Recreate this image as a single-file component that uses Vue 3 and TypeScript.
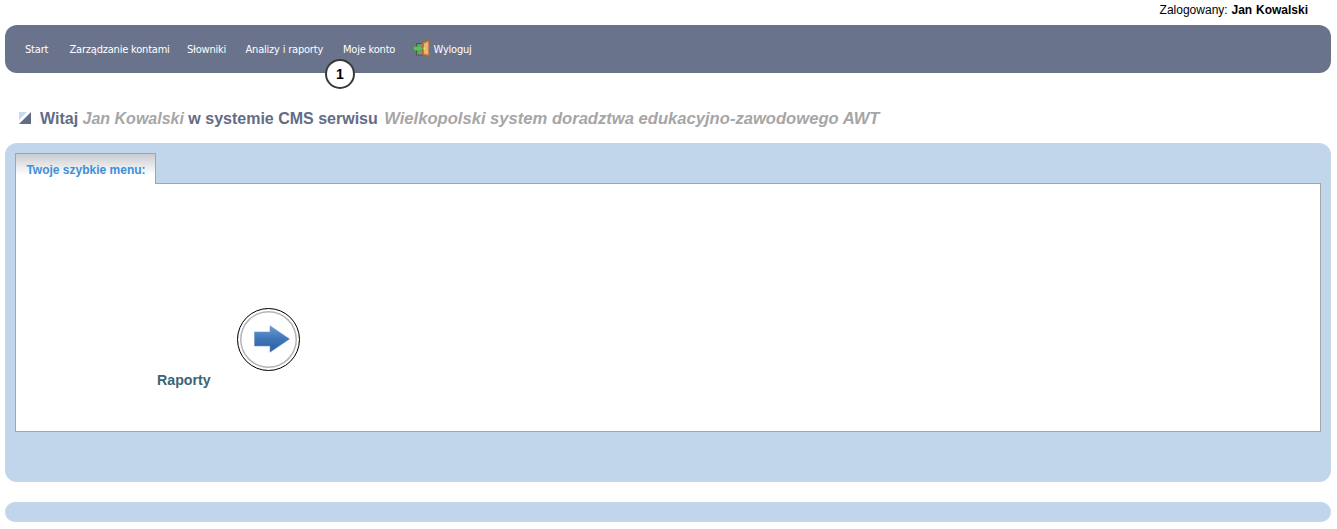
<script setup lang="ts">
interface MenuItem {
  label: string
  width: number
}
const menu: MenuItem[] = [
  { label: 'Start', width: 25 },
  { label: 'Zarządzanie kontami', width: 98 },
  { label: 'Słowniki', width: 39 },
  { label: 'Analizy i raporty', width: 78 },
  { label: 'Moje konto', width: 53 },
]
</script>

<template>
  <div class="page">
    <div class="login">Zalogowany: <b>Jan Kowalski</b></div>
    <nav class="nav">
      <a v-for="m in menu" :key="m.label" class="item" :style="{ width: m.width + 'px' }">{{ m.label }}</a>
      <a class="item logout">
        <svg class="door" width="17" height="18" viewBox="0 0 17 18">
          <rect x="3.5" y="4.5" width="7" height="11.5" fill="#8b8f8c" stroke="#4f5352" stroke-width="1" />
          <path d="M9.5 3.5 L16.5 0.5 V17.5 L9.5 16 Z" fill="#bd7a3a" stroke="#a2682f" stroke-width="0.8" />
          <path d="M11 4.5 L15.2 2.8 V15.5 L11 14.8 Z" fill="#e8b47c" />
          <rect x="10.5" y="8.5" width="1.5" height="2" fill="#f5df74" />
          <path d="M0.5 7.5 H5 V5 L10 9.5 L5 14 V11.5 H0.5 Z" fill="#63bd5f" stroke="#3d9a45" stroke-width="0.7" />
        </svg>
        <span>Wyloguj</span>
      </a>
      <span class="badge">1</span>
    </nav>
    <h1 class="title">
      <svg class="corner" width="12" height="12" viewBox="0 0 12 12">
        <path d="M0 0 H8 L0 8 Z" fill="#c6daef" />
        <path d="M12 0 V12 H0 Z" fill="#636c85" />
      </svg>
      <span class="title-text">Witaj <i class="grey">Jan Kowalski</i> w systemie CMS serwisu <i class="grey wide">Wielkopolski system doradztwa edukacyjno-zawodowego AWT</i></span>
    </h1>
    <section class="panel">
      <div class="tab">Twoje szybkie menu:</div>
      <div class="box">
        <div class="shortcut">
          <div class="ring">
            <svg class="arrow" width="36" height="28" viewBox="0 0 36 28">
              <defs>
                <linearGradient id="arr" x1="0" y1="0" x2="0" y2="1">
                  <stop offset="0" stop-color="#6a9ad2" />
                  <stop offset="0.5" stop-color="#3f76b8" />
                  <stop offset="1" stop-color="#2c5d9f" />
                </linearGradient>
              </defs>
              <path d="M0.5 7 H16 V0.8 L35.5 14 L16 27.2 V21 H0.5 Z" fill="url(#arr)" stroke="#6b95c4" stroke-width="0.6" />
            </svg>
          </div>
          <div class="label">Raporty</div>
        </div>
      </div>
    </section>
    <div class="footer"></div>
  </div>
</template>

<style scoped>
.page {
  width: 1337px;
  height: 529px;
  overflow: hidden;
  background: #fff;
  font-family: "Liberation Sans", Arial, sans-serif;
  box-sizing: border-box;
  padding: 0 6px 0 5px;
}
.login {
  height: 25px;
  box-sizing: border-box;
  padding: 3px 23px 0 0;
  text-align: right;
  font-size: 12px;
  line-height: 14px;
  color: #000;
  word-spacing: 0.5px;
}
.nav {
  position: relative;
  display: flex;
  align-items: center;
  height: 48px;
  border-radius: 12px;
  background: #6a738c;
  padding-left: 20px;
}
.item {
  font-family: "DejaVu Sans Condensed", "DejaVu Sans", sans-serif;
  font-stretch: condensed;
  font-size: 11px;
  letter-spacing: -0.2px;
  line-height: 14px;
  padding-top: 1px;
  color: #fff;
  margin-right: 19.5px;
  white-space: nowrap;
}
.logout {
  display: flex;
  align-items: center;
  gap: 4px;
  margin-left: -3px;
}
.door {
  display: block;
  margin-top: -3px;
}
.badge {
  position: absolute;
  left: 320px;
  top: 34px;
  width: 26px;
  height: 26px;
  border: 2px solid #3a3a3a;
  border-radius: 50%;
  background: #fff;
  color: #000;
  font-size: 14px;
  font-weight: 700;
  line-height: 26px;
  text-align: center;
}
.title {
  display: flex;
  align-items: center;
  gap: 9px;
  margin: 0;
  height: 70px;
  padding: 20px 0 0 14px;
  box-sizing: border-box;
  font-size: 16px;
  font-weight: 700;
  color: #636c85;
}
.title-text {
  margin-top: 2px;
}
.corner {
  display: block;
  flex: none;
}
.grey {
  color: #a6a6a6;
}
.wide {
  font-size: 16.6px;
  margin-left: 2px;
}
.panel {
  height: 339px;
  box-sizing: border-box;
  padding: 10px 10px 0;
  border-radius: 12px;
  background: #c1d6eb;
}
.tab {
  position: relative;
  z-index: 1;
  width: 141px;
  height: 31px;
  box-sizing: border-box;
  border: 2px solid #a5a5a5;
  border-width: 1px 1px 0;
  background: linear-gradient(#c9ccd0, #fff 70%);
  color: #3d8fdc;
  font-size: 12px;
  font-weight: 700;
  line-height: 32px;
  padding-left: 1px;
  text-align: center;
}
.box {
  height: 249px;
  margin-top: -1px;
  box-sizing: border-box;
  border: 1px solid #a5a5a5;
  background: #fff;
  padding: 123px 0 0 141px;
}
.shortcut {
  position: relative;
  width: 60px;
}
.ring {
  position: absolute;
  left: 80px;
  top: 1px;
  width: 63px;
  height: 63px;
  box-sizing: border-box;
  border: 1px solid #000;
  border-radius: 50%;
  display: flex;
  align-items: center;
  justify-content: center;
  background: #fff;
  box-shadow: inset 0 0 0 2px #fff, inset 0 0 0 3.5px #b5b5b5;
}
.arrow {
  display: block;
  margin: -2px 0 0 6px;
}
.label {
  padding-top: 65px;
  font-size: 14.2px;
  font-weight: 700;
  color: #3a6478;
  line-height: 16px;
}
.footer {
  height: 20px;
  margin-top: 20px;
  border-radius: 10px;
  background: #c1d6eb;
}
</style>
